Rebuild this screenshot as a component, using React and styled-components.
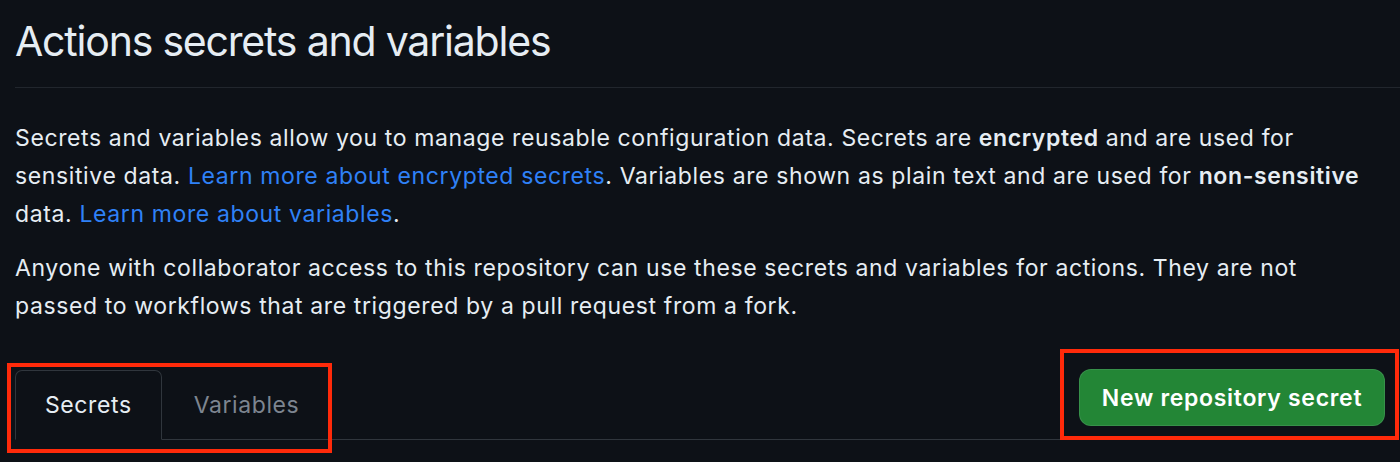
import React from "react";
import styled, { createGlobalStyle } from "styled-components";

const GlobalStyle = createGlobalStyle`
  html, body {
    margin: 0;
    padding: 0;
    background: #0d1117;
    overflow: hidden;
  }
  body {
    font-family: Inter, "Liberation Sans", Arial, sans-serif;
    color: #e6edf3;
    -webkit-font-smoothing: antialiased;
  }
`;

const Page = styled.div`
  width: 1400px;
  height: 462px;
  box-sizing: border-box;
  padding-left: 15px;
  background: #0d1117;
  overflow: hidden;
`;

const Header = styled.div`
  padding-top: 16px;
  padding-bottom: 20px;
  border-bottom: 1px solid #21262d;
`;

const Title = styled.h1`
  margin: 0;
  font-size: 41px;
  line-height: 51px;
  font-weight: 400;
  color: #e6edf3;
  letter-spacing: -1.2px;
`;

const Paragraph = styled.p`
  margin: ${(p) => p.$mt || 0}px 0 0 0;
  max-width: 1352px;
  font-size: 23px;
  line-height: 38px;
  letter-spacing: 0.62px;
  color: #e6edf3;
`;

const Link = styled.a`
  color: #2f81f7;
  text-decoration: none;
`;

const Strong = styled.strong`
  font-weight: 600;
`;

const ActionRow = styled.div`
  display: flex;
  align-items: flex-start;
  margin-top: 45px;
`;

const TabNav = styled.div`
  flex: 1;
  display: flex;
  align-items: flex-end;
  border-bottom: 1px solid #30363d;
  height: 69px;
`;

const TabList = styled.div`
  position: relative;
  display: flex;
  align-items: flex-end;
`;

const Tab = styled.div`
  box-sizing: border-box;
  height: 70px;
  margin-bottom: -1px;
  padding: 0 ${(p) => (p.$active ? 29 : 31)}px;
  display: flex;
  align-items: center;
  font-size: 23px;
  letter-spacing: 0.6px;
  color: ${(p) => (p.$active ? "#e6edf3" : "#7d8590")};
  background: ${(p) => (p.$active ? "#0d1117" : "transparent")};
  border: 1px solid ${(p) => (p.$active ? "#30363d" : "transparent")};
  border-bottom-color: ${(p) => (p.$active ? "#0d1117" : "transparent")};
  border-radius: 7px 7px 0 0;
`;

const ButtonArea = styled.div`
  position: relative;
  padding: 0 15px 0 19px;
  margin-top: -1px;
`;

const PrimaryButton = styled.button`
  box-sizing: border-box;
  width: 306px;
  height: 57px;
  padding: 0;
  border-radius: 12px;
  background: #238636;
  border: 1px solid rgba(240, 246, 252, 0.1);
  color: #ffffff;
  font-family: Inter, "Liberation Sans", Arial, sans-serif;
  font-size: 23px;
  font-weight: 600;
  letter-spacing: 0.7px;
  cursor: pointer;
`;

const Annotation = styled.div`
  position: absolute;
  top: ${(p) => p.$top}px;
  right: ${(p) => p.$right}px;
  bottom: ${(p) => p.$bottom}px;
  left: ${(p) => p.$left}px;
  border: 4px solid #ff2a0a;
  pointer-events: none;
`;

export default function App() {
  return (
    <>
      <GlobalStyle />
      <Page>
        <Header>
          <Title>Actions secrets and variables</Title>
        </Header>
        <Paragraph $mt={31}>
          Secrets and variables allow you to manage reusable configuration data.
          Secrets are <Strong>encrypted</Strong> and are used for sensitive data.{" "}
          <Link href="#">Learn more about encrypted secrets</Link>. Variables are
          shown as plain text and are used for <Strong>non-sensitive</Strong> data.{" "}
          <Link href="#">Learn more about variables</Link>.
        </Paragraph>
        <Paragraph $mt={16}>
          Anyone with collaborator access to this repository can use these secrets
          and variables for actions. They are not passed to workflows that are
          triggered by a pull request from a fork.
        </Paragraph>
        <ActionRow>
          <TabNav>
            <TabList>
              <Tab $active>Secrets</Tab>
              <Tab>Variables</Tab>
              <Annotation $top={-7} $right={-1} $bottom={-14} $left={-8} />
            </TabList>
          </TabNav>
          <ButtonArea>
            <PrimaryButton>New repository secret</PrimaryButton>
            <Annotation $top={-20} $right={1} $bottom={-14} $left={0} />
          </ButtonArea>
        </ActionRow>
      </Page>
    </>
  );
}
